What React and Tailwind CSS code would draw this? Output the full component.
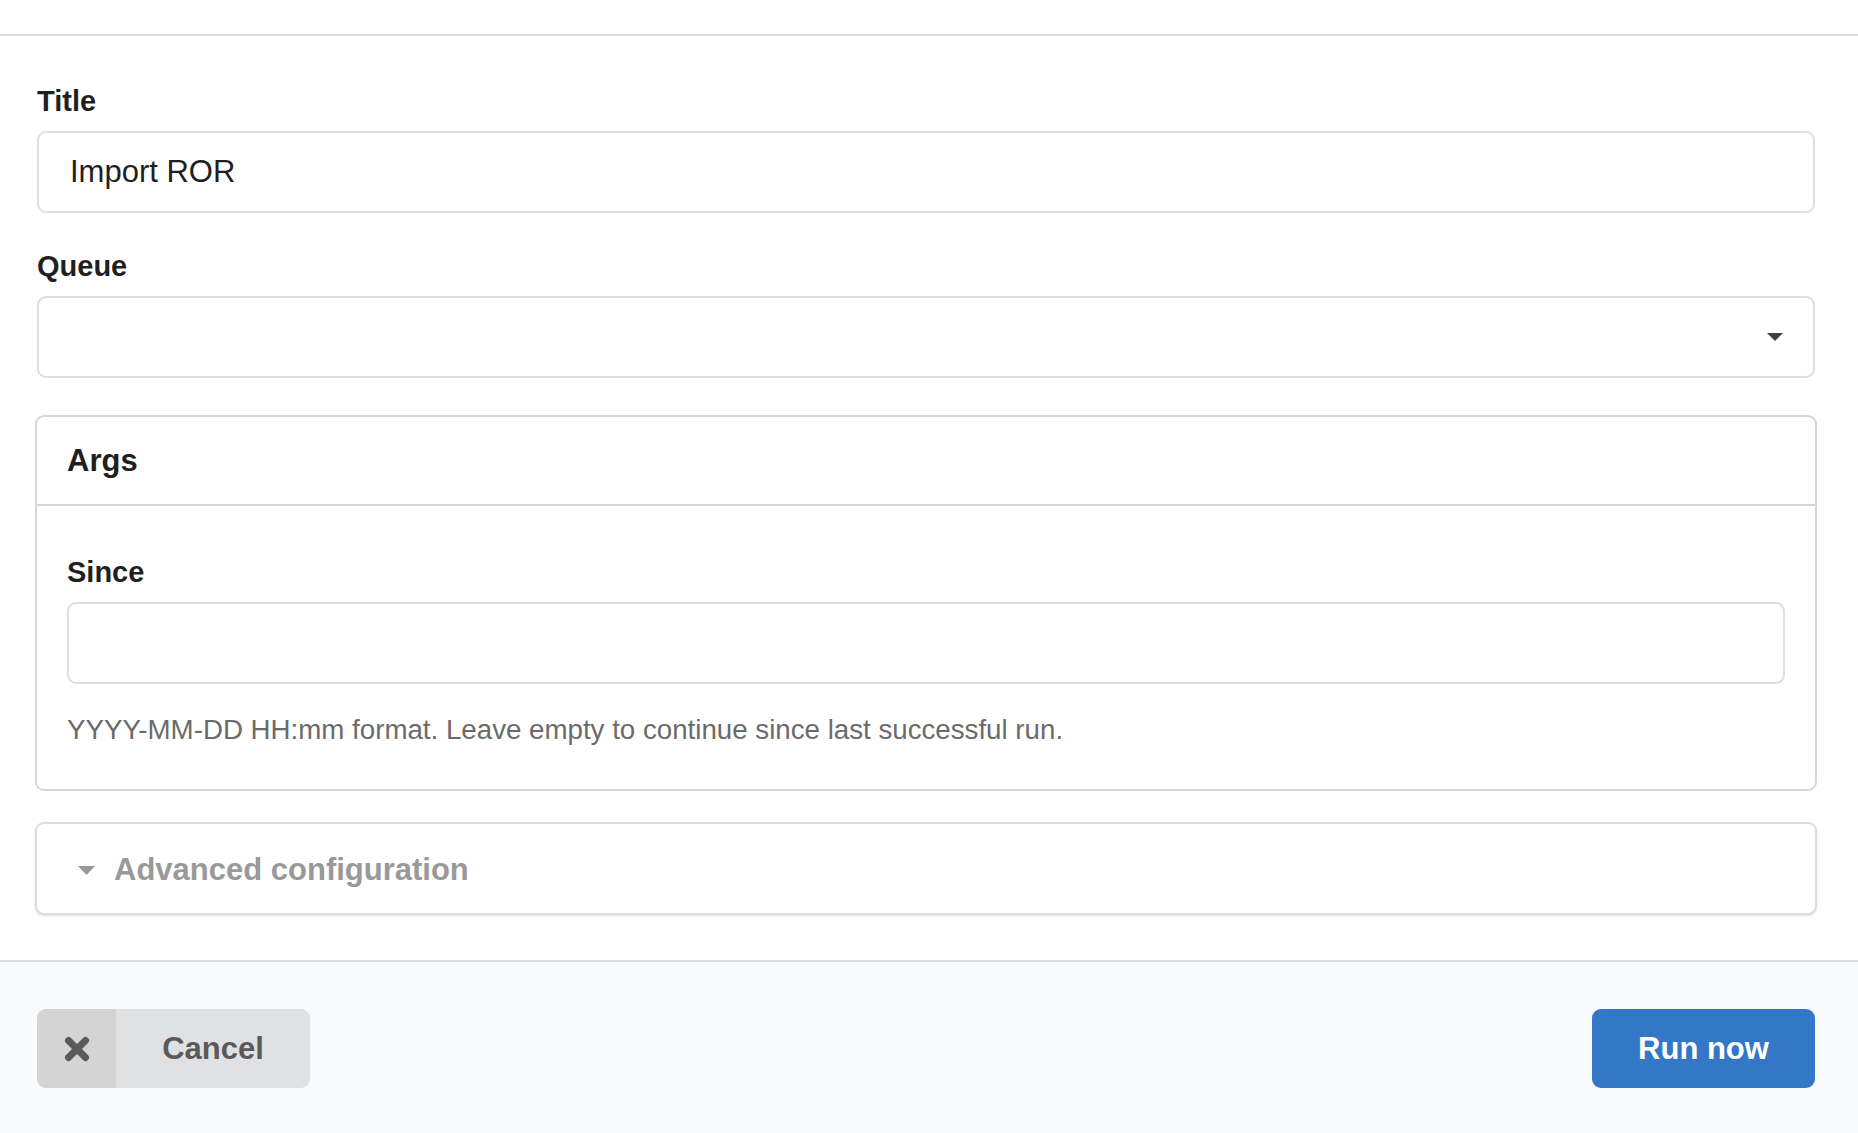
import React from "react";

function Label({ children }) {
  return (
    <div className="text-[29px] leading-[36px] font-bold text-[#1f1f1f] mb-[12px]">
      {children}
    </div>
  );
}

function Caret({ className }) {
  return (
    <svg width="17" height="9" viewBox="0 0 17 9" className={className}>
      <polygon points="0,0 17,0 8.5,9" fill="currentColor" />
    </svg>
  );
}

export default function App() {
  return (
    <div className="w-full bg-white font-['Liberation_Sans',Arial,sans-serif]">
      {/* header edge */}
      <div className="h-[36px] border-b-2 border-[#dcdcdc]" />

      {/* FORM */}
      <div className="pl-[37px] pr-[43px] pt-[47px] pb-[45px]">
        <Label>Title</Label>
        <input
          readOnly
          defaultValue="Import ROR"
          className="block w-full h-[82px] px-[31px] border-2 border-[#dedede] rounded-[9px] text-[31px] text-[#1f1f1f] outline-none"
        />

        <div className="mt-[35px]">
          <Label>Queue</Label>
          <div className="flex items-center justify-end h-[82px] pr-[30px] border-2 border-[#dedede] rounded-[9px]">
            <svg width="16" height="8" viewBox="0 0 16 8" className="text-[#3f3f3f]">
              <polygon points="0,0 16,0 8,8" fill="currentColor" />
            </svg>
          </div>
        </div>

        {/* ARGS */}
        <div className="mt-[37px] -mx-[2px] border-2 border-[#d6d6d6] rounded-[9px]">
          <div className="h-[89px] flex items-center px-[30px] border-b-2 border-[#d6d6d6] text-[31px] leading-[36px] font-bold text-[#1f1f1f]">
            Args
          </div>
          <div className="px-[30px] pt-[48px] pb-[41px]">
            <Label>Since</Label>
            <input
              readOnly
              className="block w-full h-[82px] px-[31px] border-2 border-[#dedede] rounded-[9px] text-[31px] outline-none"
            />
            <p className="mt-[28px] text-[27.7px] leading-[36px] text-[#6b6b6b]">
              YYYY-MM-DD HH:mm format. Leave empty to continue since last successful run.
            </p>
          </div>
        </div>

        {/* ADVANCED */}
        <div className="mt-[31px] -mx-[2px] h-[93px] pt-[3px] flex items-center gap-[19px] pl-[41px] border-2 border-[#dcdcdc] rounded-[9px] shadow-[0_1px_2px_0_rgba(34,36,38,0.15)]">
          <Caret className="text-[#999999]" />
          <span className="text-[31px] leading-[36px] font-bold text-[#999999]">
            Advanced configuration
          </span>
        </div>
      </div>

      {/* FOOTER */}
      <div className="border-t-2 border-[#dcdcdc] bg-[#f9fafb] pl-[37px] pr-[43px] pt-[47px] pb-[46px] flex items-center justify-between">
        <button className="flex h-[79px] w-[273px] rounded-[9px] overflow-hidden bg-[#e0e1e2] text-[#5a5a5a]">
          <span className="w-[79px] h-full flex items-center justify-center bg-[#d4d4d5]">
            <svg width="26" height="26" viewBox="0 0 26 26">
              <line x1="4.5" y1="4.5" x2="21.5" y2="21.5" stroke="#5a5a5a" strokeWidth="7" strokeLinecap="round" />
              <line x1="21.5" y1="4.5" x2="4.5" y2="21.5" stroke="#5a5a5a" strokeWidth="7" strokeLinecap="round" />
            </svg>
          </span>
          <span className="flex-1 flex items-center justify-center pt-[2px] text-[31px] font-bold">
            Cancel
          </span>
        </button>

        <button className="h-[79px] w-[223px] pt-[2px] rounded-[9px] bg-[#3477c7] text-white text-[31px] font-bold">
          Run now
        </button>
      </div>
    </div>
  );
}
